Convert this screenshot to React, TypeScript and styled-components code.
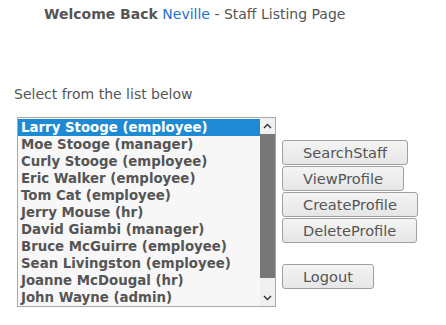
import React from 'react';
import styled, { createGlobalStyle } from 'styled-components';

const GlobalStyle = createGlobalStyle`
  body {
    margin: 0;
    background: #ffffff;
    font-family: "DejaVu Sans", "Liberation Sans", sans-serif;
    color: #555555;
  }
`;

const Page = styled.div`
  width: 446px;
  height: 325px;
  padding: 6px 0 0 14px;
  box-sizing: border-box;
`;

const Header = styled.div`
  padding-left: 30px;
  font-size: 14px;
  line-height: 17px;
`;

const Strong = styled.span`
  font-weight: bold;
`;

const UserName = styled.span`
  color: #1f6fd6;
`;

const Prompt = styled.div`
  margin-top: 63px;
  font-size: 14px;
  line-height: 17px;
`;

const Row = styled.div`
  display: flex;
  align-items: flex-start;
  gap: 6px;
  margin-top: 14px;
  padding-left: 3px;
`;

const ListBox = styled.div`
  display: flex;
  width: 259px;
  height: 190px;
  border: 1px solid #a9a9a9;
  background: #f7f7f7;
  box-sizing: border-box;
`;

const Items = styled.ul`
  flex: 1;
  margin: 0;
  padding: 1px 0 0;
  list-style: none;
  overflow: hidden;
`;

const Item = styled.li<{ $selected?: boolean }>`
  height: 17px;
  line-height: 17px;
  padding-left: 3px;
  font-size: 13.33px;
  font-weight: bold;
  white-space: nowrap;
  color: ${({ $selected }) => ($selected ? '#ffffff' : '#555555')};
  background: ${({ $selected }) => ($selected ? '#1d8ad3' : 'transparent')};
`;

const ScrollBar = styled.div`
  width: 15px;
  display: flex;
  flex-direction: column;
  background: #f0f0f0;
`;

const ScrollArrow = styled.div`
  height: 16px;
  display: flex;
  align-items: center;
  justify-content: center;
`;

const Thumb = styled.div`
  flex: 1;
  background: #777777;
  margin-bottom: 12px;
`;

const Buttons = styled.div`
  display: flex;
  flex-direction: column;
  align-items: flex-start;
  gap: 1px;
  padding-top: 23px;
`;

const Button = styled.button<{ $spaced?: boolean }>`
  height: 25px;
  padding: 0 20px;
  margin-top: ${({ $spaced }) => ($spaced ? '20px' : '0')};
  font-family: "DejaVu Sans", "Liberation Sans", sans-serif;
  font-size: 14.6px;
  color: #555555;
  background: linear-gradient(#f4f4f4, #e6e6e6);
  border: 1px solid #a0a0a0;
  border-radius: 3px;
`;

const staff = [
  'Larry Stooge (employee)',
  'Moe Stooge (manager)',
  'Curly Stooge (employee)',
  'Eric Walker (employee)',
  'Tom Cat (employee)',
  'Jerry Mouse (hr)',
  'David Giambi (manager)',
  'Bruce McGuirre (employee)',
  'Sean Livingston (employee)',
  'Joanne McDougal (hr)',
  'John Wayne (admin)',
];

const Chevron = ({ up }: { up?: boolean }) => (
  <svg width="9" height="6" viewBox="0 0 9 6">
    <path
      d={up ? 'M1 5 L4.5 1.5 L8 5' : 'M1 1 L4.5 4.5 L8 1'}
      fill="none"
      stroke="#333"
      strokeWidth="1.4"
    />
  </svg>
);

export default function App() {
  return (
    <Page>
      <GlobalStyle />
      <Header>
        <Strong>Welcome Back</Strong> <UserName>Neville</UserName> - Staff Listing Page
      </Header>
      <Prompt>Select from the list below</Prompt>
      <Row>
        <ListBox>
          <Items>
            {staff.map((name, i) => (
              <Item key={name} $selected={i === 0}>
                {name}
              </Item>
            ))}
          </Items>
          <ScrollBar>
            <ScrollArrow>
              <Chevron up />
            </ScrollArrow>
            <Thumb />
            <ScrollArrow>
              <Chevron />
            </ScrollArrow>
          </ScrollBar>
        </ListBox>
        <Buttons>
          <Button>SearchStaff</Button>
          <Button>ViewProfile</Button>
          <Button>CreateProfile</Button>
          <Button>DeleteProfile</Button>
          <Button $spaced>Logout</Button>
        </Buttons>
      </Row>
    </Page>
  );
}
